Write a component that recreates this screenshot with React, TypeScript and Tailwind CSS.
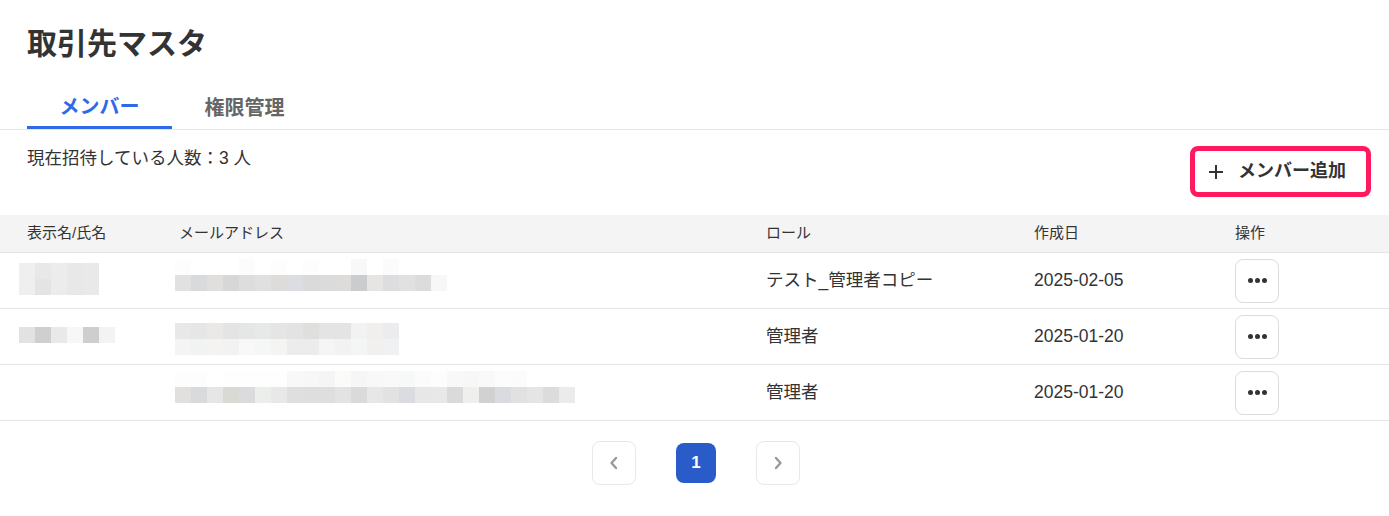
import React from 'react'

type Member = {
  name: string[][]
  nameTop: string
  email: string[][]
  emailTop: string
  role: string
  createdAt: string
}

const members: Member[] = [
  {
    name: [
      ['#f0efee', '#e8e8e9', '#ececec', '#e8e8e9', '#e9e9eb'],
      ['#efefef', '#e4e4e4', '#ececec', '#e8e8e8', '#e9e9e9'],
    ],
    nameTop: 'mt-[10px]',
    email: [
      ['#fdfdfd', '#ffffff', '#ffffff', '#ffffff', '#fcfcfc', '#ffffff', '#fdfdfd', '#ffffff', '#fdfdfd', '#ffffff', '#ffffff', '#f8f8f8', '#ffffff', '#fbfbfb'],
      ['#e1e1e1', '#d9dadc', '#e0dfdd', '#d7d7d7', '#dddddd', '#dfe0df', '#dedcda', '#dcdde0', '#dadada', '#dbdbdb', '#dddcda', '#cbcccd', '#e6e5e3', '#dddde0', '#e1e1e1', '#dcdcdc', '#f7f7f7'],
    ],
    emailTop: 'mt-[6px]',
    role: 'テスト_管理者コピー',
    createdAt: '2025-02-05',
  },
  {
    name: [['#e3e2e1', '#cfcfcf', '#e9e9e9', '#f7f7f7', '#cdcecd', '#f2f3f5']],
    nameTop: 'mt-[18px]',
    email: [
      ['#e8e8e8', '#e6e6e6', '#eae9e7', '#e4e4e4', '#e5e6e6', '#e7e9e8', '#e4e5e4', '#e3e3e3', '#dfdfdd', '#e4e4e4', '#e4e4e4', '#f2f2f2', '#f1efee', '#ececee'],
      ['#f4f4f4', '#f1f2f2', '#f4f3f1', '#f2f2f2', '#f8f8f8', '#f5f6f6', '#f4f4f2', '#ececec', '#ececec', '#f5f5f5', '#f2f2f2', '#f4f5f5', '#f2f0ee', '#f0f1f3'],
    ],
    emailTop: 'mt-[14px]',
    role: '管理者',
    createdAt: '2025-01-20',
  },
  {
    name: [],
    nameTop: '',
    email: [
      ['#fdfdfd', '#fdfdfd', '#ffffff', '#fefefe', '#fefefe', '#fefefe', '#fefefe', '#f8f8f8', '#f7f7f7', '#f5f5f5', '#fbfbf9', '#f6f6f6', '#f8f8f8', '#f9f9f9', '#f7f8f8', '#fbfbfb', '#fdfdfd', '#f8f8f8', '#f7f7f7', '#f9f9f9', '#fcfcfc', '#fbfbfb'],
      ['#e1e0df', '#d9dadc', '#e6e6e6', '#d9d9d6', '#dbdbdd', '#eceeec', '#e8e8e8', '#dfdfdf', '#dedede', '#dedede', '#e3e3e3', '#dadada', '#e7e7e7', '#e2e2e2', '#dadcdf', '#e7e7e7', '#e8e8e8', '#dadada', '#efefed', '#d2d1d2', '#dadbdf', '#e1e1e1', '#e5e5e5', '#dcdcdc', '#ebebeb'],
    ],
    emailTop: 'mt-[6px]',
    role: '管理者',
    createdAt: '2025-01-20',
  },
]

function Mosaic({ rows, className = '' }: { rows: string[][]; className?: string }) {
  return (
    <div className={`flex flex-col ${className}`}>
      {rows.map((row, i) => (
        <div key={i} className="flex">
          {row.map((c, j) => (
            <div key={j} className="h-4 w-4" style={{ backgroundColor: c }} />
          ))}
        </div>
      ))}
    </div>
  )
}

function Dots() {
  return (
    <span className="flex items-center gap-[2px]">
      <span className="h-[5px] w-[5px] rounded-full bg-[#333]" />
      <span className="h-[5px] w-[5px] rounded-full bg-[#333]" />
      <span className="h-[5px] w-[5px] rounded-full bg-[#333]" />
    </span>
  )
}

function Chevron({ dir }: { dir: 'left' | 'right' }) {
  return (
    <svg width="12" height="14" viewBox="0 0 12 14" fill="none">
      <path
        d={dir === 'left' ? 'M8 2L3.5 7L8 12' : 'M4 2L8.5 7L4 12'}
        stroke="#999"
        strokeWidth="2.4"
        strokeLinecap="round"
        strokeLinejoin="round"
      />
    </svg>
  )
}

export default function App() {
  return (
    <div
      className="min-h-[516px] w-full bg-white text-[#333]"
      style={{ fontFamily: '"Liberation Sans", "Noto Sans CJK JP", sans-serif' }}
    >
      <h1 className="px-[27px] pt-[24px] text-[30px] font-bold leading-[40px]">取引先マスタ</h1>

      <div className="mt-[23px] flex border-b border-[#e6e6e6] px-[27px]">
        <div className="-mb-px flex h-[42px] w-[145px] items-center justify-center border-b-[3px] border-[#2d69e9] text-[20px] font-bold text-[#2d69e9]">
          メンバー
        </div>
        <div className="flex h-[42px] w-[145px] items-center justify-center text-[20px] font-bold text-[#666]">
          権限管理
        </div>
      </div>

      <div className="flex items-start justify-between px-[18px] pt-[16px]">
        <p className="pl-[9px] text-[17.5px] leading-[24px]">現在招待している人数：3 人</p>
        <button className="flex h-[51px] w-[181px] items-center gap-[14px] rounded-[8px] border-[5px] border-[#ff1a5f] bg-white pl-[13px] text-[18px] font-bold text-[#333]">
          <svg width="16" height="16" viewBox="0 0 16 16" fill="none">
            <path d="M8 1V15M1 8H15" stroke="#333" strokeWidth="2" />
          </svg>
          <span>メンバー追加</span>
        </button>
      </div>

      <div className="mt-[18px]">
        <div className="grid h-[38px] grid-cols-[152px_587px_268px_201px_1fr] items-center border-b border-[#e6e6e6] bg-[#f5f4f5] pl-[27px] text-[15px]">
          <span>表示名/氏名</span>
          <span>メールアドレス</span>
          <span>ロール</span>
          <span>作成日</span>
          <span>操作</span>
        </div>

        {members.map((m, i) => (
          <div
            key={i}
            className="grid h-[56px] grid-cols-[152px_587px_268px_201px_1fr] grid-rows-[55px] items-center border-b border-[#e6e6e6] pl-[27px] text-[17.5px]"
          >
            <div className="-ml-[8px] self-start">
              <Mosaic rows={m.name} className={m.nameTop} />
            </div>
            <div className="-ml-[4px] self-start">
              <Mosaic rows={m.email} className={m.emailTop} />
            </div>
            <span>{m.role}</span>
            <span>{m.createdAt}</span>
            <div>
              <button className="flex h-[44px] w-[44px] items-center justify-center rounded-[8px] border border-[#dcdcdc] bg-white">
                <Dots />
              </button>
            </div>
          </div>
        ))}
      </div>

      <div className="mt-[20px] flex items-center justify-center gap-[40px] pl-[3px]">
        <button className="flex h-[44px] w-[44px] items-center justify-center rounded-[8px] border border-[#e8e8e8] bg-white">
          <Chevron dir="left" />
        </button>
        <button className="flex h-[40px] w-[40px] items-center justify-center rounded-[8px] bg-[#2a5cc9] text-[17px] font-bold text-white">
          1
        </button>
        <button className="flex h-[44px] w-[44px] items-center justify-center rounded-[8px] border border-[#e8e8e8] bg-white">
          <Chevron dir="right" />
        </button>
      </div>
    </div>
  )
}
